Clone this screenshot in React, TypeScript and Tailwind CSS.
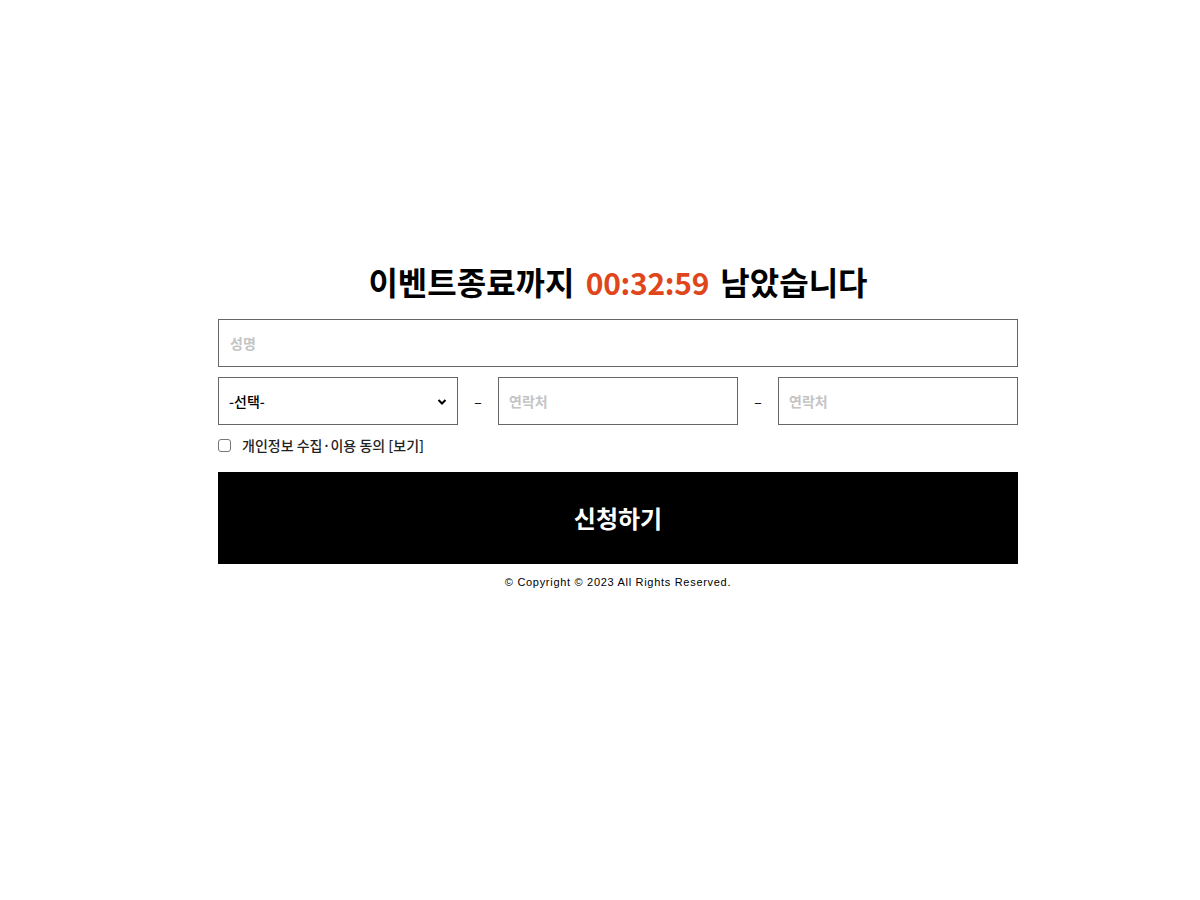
import React from "react";

export default function App() {
  const font = { fontFamily: '"Noto Sans CJK KR", "Noto Sans", sans-serif' };
  return (
    <div className="w-full min-h-[900px] bg-white" style={font}>
      <div className="w-[800px] ml-[218px] pt-[257px]">
        <h1 className="text-center text-[32px] font-bold leading-[48px] text-black mb-[13px] whitespace-nowrap [word-spacing:4px]">
          이벤트종료까지 <span className="text-[#e0461c] text-[30px] tracking-[-0.3px]">00:32:59</span> 남았습니다
        </h1>
        <input
          className="block w-full h-[48px] border border-[#666] px-[11px] text-[14px] font-bold outline-none placeholder:text-[#c4c4c4]"
          placeholder="성명"
        />
        <div className="flex items-center mt-[10px] h-[48px]">
          <div className="relative w-[240px] h-[48px] border border-[#666] flex items-center px-[10px]">
            <span className="text-[14px] font-medium text-black">-선택-</span>
            <svg className="absolute right-[10px] top-[20px]" width="10" height="8" viewBox="0 0 10 8">
              <path d="M1.5 2 L5 5.5 L8.5 2" stroke="#000" strokeWidth="2" fill="none" />
            </svg>
          </div>
          <div className="w-[40px] text-center text-[14px] text-black">–</div>
          <input
            className="block w-[240px] h-[48px] border border-[#666] px-[10px] text-[14px] font-bold outline-none placeholder:text-[#c4c4c4]"
            placeholder="연락처"
          />
          <div className="w-[40px] text-center text-[14px] text-black">–</div>
          <input
            className="block w-[240px] h-[48px] border border-[#666] px-[10px] text-[14px] font-bold outline-none placeholder:text-[#c4c4c4]"
            placeholder="연락처"
          />
        </div>
        <div className="flex items-center mt-[10px] h-[20px]">
          <span className="w-[13px] h-[13px] border border-[#767676] rounded-[3px] bg-white" />
          <span className="ml-[11px] text-[14px] font-medium text-[#222]">개인정보 수집·이용 동의 [보기]</span>
        </div>
        <button className="block w-full h-[92px] bg-black text-white text-[24px] font-bold mt-[17px]">
          신청하기
        </button>
        <p
          className="text-center text-[11px] text-black mt-[10px] tracking-[0.7px]"
          style={{ fontFamily: '"Liberation Sans", Arial, sans-serif' }}
        >
          © Copyright © 2023 All Rights Reserved.
        </p>
      </div>
    </div>
  );
}
